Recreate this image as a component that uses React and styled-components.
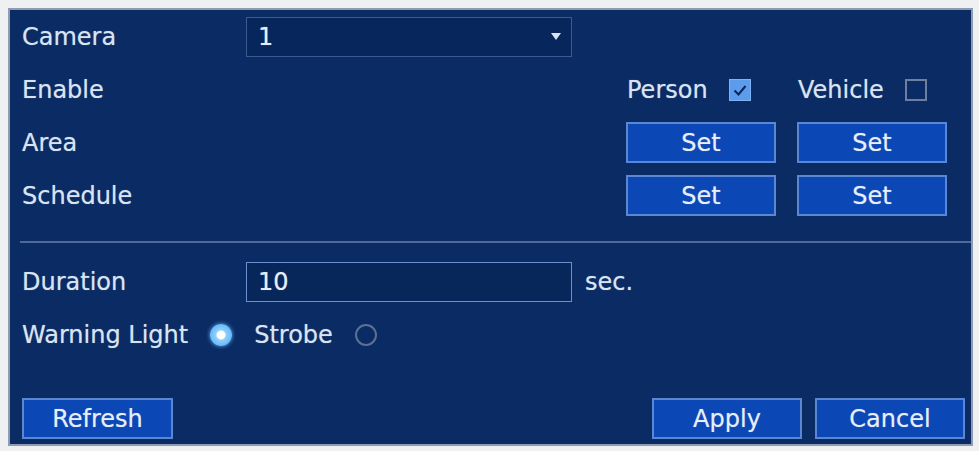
import React from "react";
import styled, { createGlobalStyle } from "styled-components";

const GlobalStyle = createGlobalStyle`
  html, body {
    margin: 0;
    padding: 0;
    background: #eef0f2;
  }
  body {
    font-family: "DejaVu Sans", "Open Sans", sans-serif;
  }
`;

function App() {
  return (
    <Page>
      <GlobalStyle />
      <Panel>
        <Row>
          <Label>Camera</Label>
          <Select>
            <FieldText>1</FieldText>
            <Arrow />
          </Select>
        </Row>
        <Row>
          <Label>Enable</Label>
          <RightGroup>
            <CheckCell>
              <span>Person</span>
              <Checkbox checked>
                <svg width="16" height="16" viewBox="0 0 16 16">
                  <path d="M2.5 8.5 L6.5 12.5 L13.5 4" fill="none" stroke="#0c2454" strokeWidth="2" />
                </svg>
              </Checkbox>
            </CheckCell>
            <CheckCell>
              <span>Vehicle</span>
              <Checkbox />
            </CheckCell>
          </RightGroup>
        </Row>
        <Row>
          <Label>Area</Label>
          <RightGroup>
            <Button>Set</Button>
            <Button>Set</Button>
          </RightGroup>
        </Row>
        <Row>
          <Label>Schedule</Label>
          <RightGroup>
            <Button>Set</Button>
            <Button>Set</Button>
          </RightGroup>
        </Row>
        <Divider />
        <Row>
          <Label>Duration</Label>
          <Input>
            <FieldText>10</FieldText>
          </Input>
          <Unit>sec.</Unit>
        </Row>
        <Row>
          <RadioLabel>Warning Light</RadioLabel>
          <Radio checked />
          <RadioLabel>Strobe</RadioLabel>
          <Radio />
        </Row>
        <Spacer />
        <Footer>
          <Button wide>Refresh</Button>
          <FooterRight>
            <Button>Apply</Button>
            <Button>Cancel</Button>
          </FooterRight>
        </Footer>
      </Panel>
    </Page>
  );
}

const Page = styled.div`
  width: 979px;
  height: 451px;
  padding: 8px 0 0 8px;
  box-sizing: border-box;
`;

const Panel = styled.div`
  display: flex;
  flex-direction: column;

  width: 965px;
  height: 438px;
  padding: 0 6px 5px 12px;
  box-sizing: border-box;

  background: #0a2b63;
  border: 2px solid #8f9bb0;
  color: #d9e4f3;
  font-size: 24px;
  text-shadow: 0 0 1px rgba(217, 228, 243, 0.5);
`;

const Row = styled.div`
  display: flex;
  align-items: center;

  height: 53px;
  margin-right: 18px;
`;

const Label = styled.div`
  width: 224px;
  flex-shrink: 0;
`;

const FieldBox = styled.div`
  display: flex;
  align-items: center;
  justify-content: space-between;

  width: 326px;
  height: 40px;
  padding: 0 10px 0 11px;
  box-sizing: border-box;
`;

const Select = styled(FieldBox)`
  background: #07275c;
  border: 1px solid #3b5a92;
`;

const Input = styled(FieldBox)`
  background: #07265a;
  border: 1px solid #6b8fd0;
`;

const FieldText = styled.span`
  color: #e6eefa;
`;

const Arrow = styled.span`
  width: 0;
  height: 0;
  border-left: 5px solid transparent;
  border-right: 5px solid transparent;
  border-top: 7px solid #d9e4f3;
`;

const Unit = styled.span`
  margin-left: 13px;
`;

const RightGroup = styled.div`
  display: grid;
  grid-template-columns: 150px 150px;
  column-gap: 21px;

  margin-left: auto;
`;

const CheckCell = styled.div`
  display: flex;
  align-items: center;
  gap: 21px;

  padding-left: 1px;
`;

const Checkbox = styled.span`
  display: flex;
  align-items: center;
  justify-content: center;

  width: 22px;
  height: 22px;
  box-sizing: border-box;

  background: ${(p) => (p.checked ? "#5b9cec" : "transparent")};
  border: ${(p) => (p.checked ? "1px solid #7fb2f0" : "2px solid #6d7f9f")};
`;

const Button = styled.div`
  display: flex;
  align-items: center;
  justify-content: center;

  width: ${(p) => (p.wide ? "151px" : "150px")};
  height: 41px;
  box-sizing: border-box;

  background: #0c47b6;
  border: 2px solid #5b86d2;
  color: #e6eefa;
`;

const Divider = styled.div`
  height: 2px;
  margin: 19px -6px 12px -2px;
  background: #4f6a95;
`;

const RadioLabel = styled.span`
  margin-right: 22px;
`;

const Radio = styled.span`
  width: 22px;
  height: 22px;
  margin-right: 22px;
  box-sizing: border-box;
  border-radius: 50%;

  ${(p) =>
    p.checked
      ? `
    background: radial-gradient(circle, #ffffff 0 4px, #8fd0ff 5px, #4aa6f2 100%);
    box-shadow: 0 0 4px #5fb4ff;
  `
      : `
    border: 2px solid #5d7095;
  `}
`;

const Spacer = styled.div`
  flex: 1;
`;

const Footer = styled.div`
  display: flex;
  align-items: center;
  justify-content: space-between;
`;

const FooterRight = styled.div`
  display: flex;
  gap: 13px;
`;

export default App;
